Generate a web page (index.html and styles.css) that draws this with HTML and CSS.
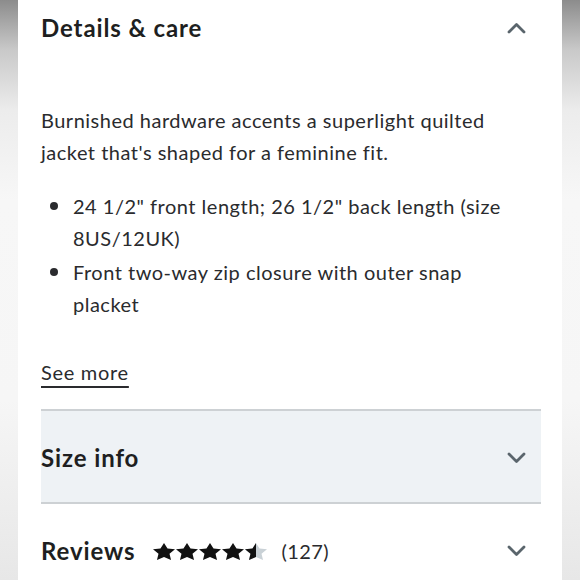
FILE: index.html
```html
<!DOCTYPE html>
<html lang="en">
<head>
<meta charset="utf-8">
<title>Details &amp; care</title>
<link rel="stylesheet" href="styles.css">
</head>
<body>
<main class="card">
  <section class="acc acc-open">
    <div class="acc-head">
      <h2 class="acc-title">Details &amp; care</h2>
      <svg class="chev" viewBox="0 0 19 12" width="19" height="12" aria-hidden="true"><polyline points="2,10 9.5,2.5 17,10" /></svg>
    </div>
    <p class="desc">Burnished hardware accents a superlight quilted jacket that's shaped for a feminine fit.</p>
    <ul class="bullets">
      <li>24 1/2" front length; 26 1/2" back length (size 8US/12UK)</li>
      <li>Front two-way zip closure with outer snap placket</li>
    </ul>
    <a class="more" href="#">See more</a>
  </section>
  <section class="acc acc-size">
    <div class="acc-head">
      <h2 class="acc-title">Size info</h2>
      <svg class="chev" viewBox="0 0 19 12" width="19" height="12" aria-hidden="true"><polyline points="2,2 9.5,9.5 17,2" /></svg>
    </div>
  </section>
  <section class="acc acc-reviews">
    <div class="acc-head">
      <div class="rev-left">
        <h2 class="acc-title">Reviews</h2>
        <div class="stars" aria-label="4.5 out of 5 stars">
          <svg class="star" viewBox="0 0 20 19" preserveAspectRatio="none"><polygon points="10,0 13.2,6.2 20,7 15,11.9 16.4,19 10,15.6 3.6,19 5,11.9 0,7 6.8,6.2"/></svg>
          <svg class="star" viewBox="0 0 20 19" preserveAspectRatio="none"><polygon points="10,0 13.2,6.2 20,7 15,11.9 16.4,19 10,15.6 3.6,19 5,11.9 0,7 6.8,6.2"/></svg>
          <svg class="star" viewBox="0 0 20 19" preserveAspectRatio="none"><polygon points="10,0 13.2,6.2 20,7 15,11.9 16.4,19 10,15.6 3.6,19 5,11.9 0,7 6.8,6.2"/></svg>
          <svg class="star" viewBox="0 0 20 19" preserveAspectRatio="none"><polygon points="10,0 13.2,6.2 20,7 15,11.9 16.4,19 10,15.6 3.6,19 5,11.9 0,7 6.8,6.2"/></svg>
          <svg class="star" viewBox="0 0 20 19" preserveAspectRatio="none">
            <defs><clipPath id="halfclip"><rect x="0" y="0" width="10" height="19"/></clipPath></defs>
            <polygon class="star-empty" points="10,0 13.2,6.2 20,7 15,11.9 16.4,19 10,15.6 3.6,19 5,11.9 0,7 6.8,6.2"/>
            <polygon clip-path="url(#halfclip)" points="10,0 13.2,6.2 20,7 15,11.9 16.4,19 10,15.6 3.6,19 5,11.9 0,7 6.8,6.2"/>
          </svg>
        </div>
        <span class="count">(127)</span>
      </div>
      <svg class="chev" viewBox="0 0 19 12" width="19" height="12" aria-hidden="true"><polyline points="2,2 9.5,9.5 17,2" /></svg>
    </div>
  </section>
</main>
</body>
</html>
```

FILE: styles.css
```css
* { box-sizing: border-box; }

html, body {
  margin: 0;
  padding: 0;
  height: 100%;
}

body {
  font-family: "Lato", "Open Sans", sans-serif;
  color: #2a2b2e;
  background: linear-gradient(to bottom, #8c8c8c 0px, #c9c9c9 50px, #ececec 110px, #f7f7f7 200px, #f6f6f6 400px, #e7e7e7 580px);
  display: flex;
  justify-content: center;
  overflow: hidden;
}

.card {
  width: 544px;
  height: 580px;
  background: #ffffff;
  padding: 0 21px 0 23px;
  overflow: hidden;
}

.acc-head {
  display: flex;
  align-items: center;
  justify-content: space-between;
}

.acc-title {
  margin: 0;
  font-size: 24px;
  line-height: 32px;
  font-weight: 700;
  letter-spacing: 0.9px;
  color: #1e1f21;
}

.chev {
  flex: none;
  margin-right: 15px;
  fill: none;
  stroke: #5a656c;
  stroke-width: 2.8;
  stroke-linecap: round;
  stroke-linejoin: round;
}

.acc-open {
  padding-top: 12px;
  padding-bottom: 21px;
}

.acc-open .chev {
  margin-top: -1px;
}

.desc {
  margin: 60px 0 0;
  font-size: 20px;
  line-height: 32px;
  letter-spacing: 0.5px;
}

.bullets {
  margin: 20px 0 0;
  padding: 0 30px 0 32px;
  font-size: 20px;
  line-height: 32px;
  letter-spacing: 0.5px;
}

.bullets li::marker {
  font-size: 25px;
}

.more {
  display: inline-block;
  margin-top: 36px;
  font-size: 20px;
  line-height: 32px;
  letter-spacing: 0.7px;
  color: #2a2b2e;
  text-decoration: underline;
  text-decoration-thickness: 1.5px;
  text-underline-offset: 6px;
}

.acc-size {
  background: #eef2f5;
  border-top: 2px solid #cdd1d4;
  border-bottom: 2px solid #cdd1d4;
  padding: 31px 0 28px;
}

.acc-reviews {
  padding-top: 31px;
}

.rev-left {
  display: flex;
  align-items: center;
}

.stars {
  display: flex;
  gap: 1px;
  margin-left: 17px;
}

.star {
  width: 22px;
  height: 17px;
  fill: #111111;
}

.star .star-empty {
  fill: #c9d1d6;
}

.count {
  margin-left: 15px;
  font-size: 20px;
  line-height: 32px;
  letter-spacing: 0.4px;
  color: #2a2b2e;
}
```
